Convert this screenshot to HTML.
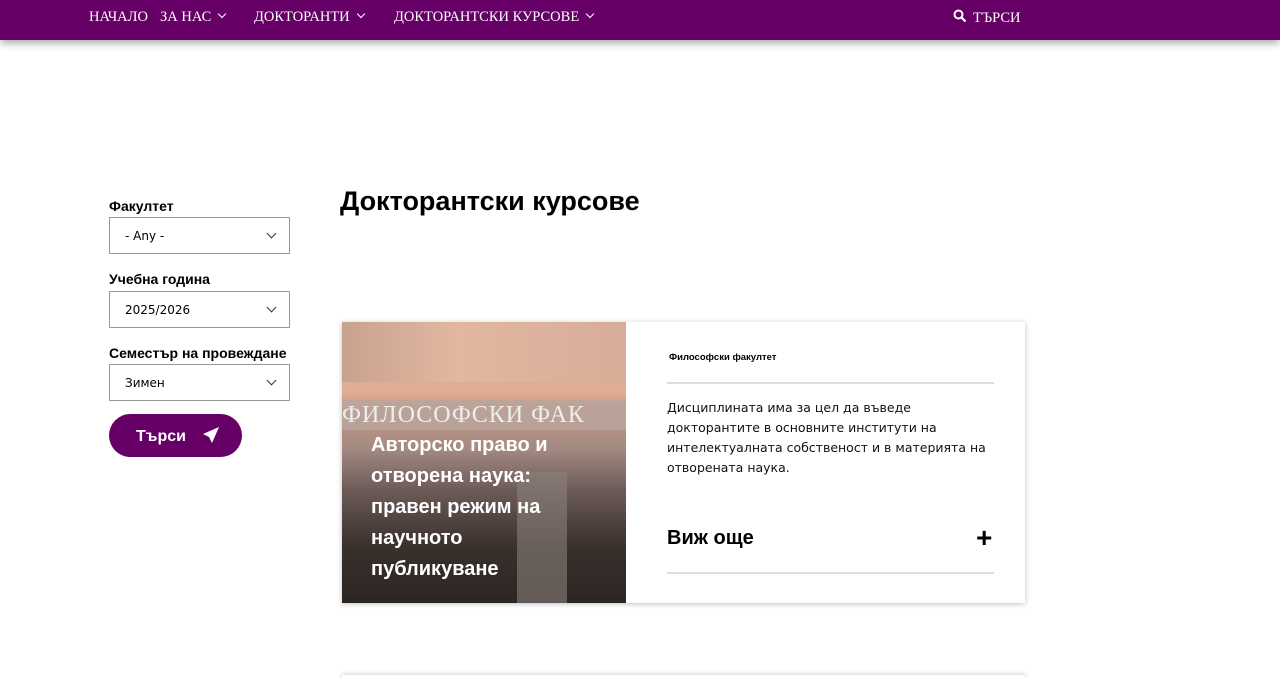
<!DOCTYPE html>
<html><head><meta charset="utf-8"><style>
*{box-sizing:border-box;margin:0;padding:0}
html,body{width:1280px;height:678px;overflow:hidden}
body{background:#fff;font-family:"Liberation Sans",sans-serif;color:#000;position:relative}
.nav{position:absolute;left:0;top:0;width:1280px;height:40px;background:#660066;box-shadow:0 3px 8px rgba(0,0,0,.35);color:#fff;font-family:"Liberation Serif",serif;font-size:14.5px;text-transform:uppercase}
.nav span{position:absolute;top:9px}
.chev{display:inline-block;width:6px;height:6px;border-right:1.5px solid #fff;border-bottom:1.5px solid #fff;transform:rotate(45deg);margin-left:8px;position:relative;top:-4px}
.lbl{position:absolute;left:109px;font-size:14px;font-weight:bold}
.sel{position:absolute;left:109px;width:181px;height:37px;border:1px solid #999;font-family:"DejaVu Sans",sans-serif;font-size:12px;padding:11px 0 0 15px}
.sel i{position:absolute;right:14px;top:12px;width:7px;height:7px;border-right:1.3px solid #333;border-bottom:1.3px solid #333;transform:rotate(45deg)}
.btn{position:absolute;left:109px;top:414px;width:133px;height:43px;border-radius:22px;background:#660066;color:#fff;font-weight:bold;font-size:16px;padding:12px 0 0 27px}
h1{position:absolute;left:340px;top:186px;font-size:27px;font-weight:bold}
.card{position:absolute;left:342px;top:322px;width:683px;height:281px;box-shadow:0 1px 5px rgba(0,0,0,.25);background:#fff}
.img{position:absolute;left:0;top:0;width:284px;height:281px;overflow:hidden;background:linear-gradient(180deg,#d9a58e 0%,#e0ae95 25%,#c89a88 30%,#a48a82 45%,#6b5b57 60%,#3a302c 80%,#2b2522 100%)}
.ttl{position:absolute;left:29px;top:108px;width:200px;color:#fff;font-size:20px;font-weight:bold;line-height:31px}
.fac{position:absolute;left:327px;top:30px;font-size:9.5px;font-weight:bold}
.hr{position:absolute;left:325px;width:327px;height:2px;background:#ddd}
.desc{position:absolute;left:325px;top:76px;width:340px;font-family:"DejaVu Sans",sans-serif;font-size:12.5px;line-height:20px;color:#111}
.more{position:absolute;left:325px;top:205px;font-size:20px;font-weight:bold}
.plus{position:absolute;left:634px;top:203px;font-size:28px;font-weight:bold;line-height:26px}
.card2{position:absolute;left:342px;top:675px;width:683px;height:10px;box-shadow:0 -1px 4px rgba(0,0,0,.2)}
</style></head><body>
<div class="nav">
<span style="left:89px">Начало</span>
<span style="left:160px">За нас<i class="chev"></i></span>
<span style="left:254px">Докторанти<i class="chev"></i></span>
<span style="left:394px">Докторантски курсове<i class="chev"></i></span>
<span style="left:953px"><svg width="14" height="14" viewBox="0 0 14 14" style="vertical-align:-1px;margin-right:6px"><circle cx="5.5" cy="5.5" r="4" fill="none" stroke="#fff" stroke-width="2"/><path d="M8.5 8.5L12.5 12.5" stroke="#fff" stroke-width="2.2"/></svg>Търси</span>
</div>
<div class="lbl" style="top:198px">Факултет</div>
<div class="sel" style="top:217px">- Any -<i></i></div>
<div class="lbl" style="top:271px">Учебна година</div>
<div class="sel" style="top:291px">2025/2026<i></i></div>
<div class="lbl" style="top:345px">Семестър на провеждане</div>
<div class="sel" style="top:364px">Зимен<i></i></div>
<div class="btn">Търси <svg width="18" height="18" viewBox="0 0 18 18" style="vertical-align:-3px;margin-left:12px"><path d="M17 1L1 8l6 3 3 6z" fill="#fff"/></svg></div>
<h1>Докторантски курсове</h1>
<div class="card">
<div class="img">
<div style="position:absolute;left:0;top:0;width:284px;height:60px;background:linear-gradient(90deg,#c9a28e,#e2b7a0 40%,#d8ad98)"></div>
<div style="position:absolute;left:0;top:78px;width:284px;height:30px;background:#b9a59c;opacity:.8"></div>
<div style="position:absolute;left:0;top:80px;width:284px;font-family:'Liberation Serif',serif;font-size:24px;color:#eee;letter-spacing:1px">ФИЛОСОФСКИ ФАК</div>
<div style="position:absolute;left:175px;top:150px;width:50px;height:131px;background:#8a807a;opacity:.6"></div>
<div class="ttl">Авторско право и отворена наука: правен режим на научното публикуване</div>
</div>
<div class="fac">Философски факултет</div>
<div class="hr" style="top:60px"></div>
<div class="desc">Дисциплината има за цел да въведе докторантите в основните институти на интелектуалната собственост и в материята на отворената наука.</div>
<div class="more">Виж още</div>
<div class="plus">+</div>
<div class="hr" style="top:250px"></div>
</div>
<div class="card2"></div>
</body></html>
